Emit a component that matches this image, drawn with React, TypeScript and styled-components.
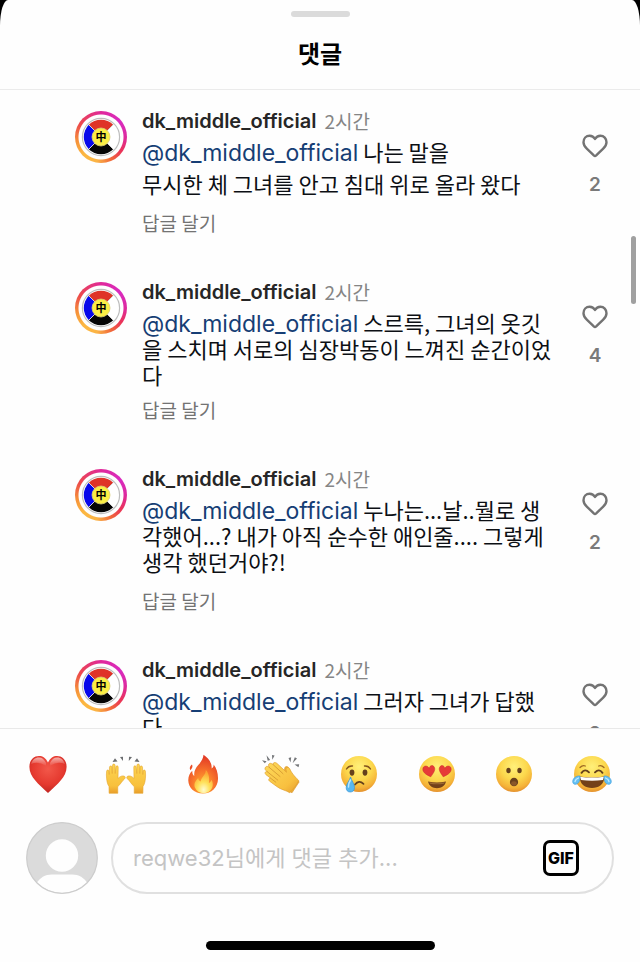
import React from "react";
import styled, { createGlobalStyle } from "styled-components";

const GlobalStyle = createGlobalStyle`
  * { box-sizing: border-box; }
  body { margin: 0; background: #000; }
  button { padding: 0; border: 0; background: none; font: inherit; color: inherit; cursor: pointer; }
`;

const latin = `Inter, "Noto Sans CJK KR", sans-serif`;
const korean = `"Noto Sans CJK KR", sans-serif`;

const Sheet = styled.div`
  position: relative;
  display: flex;
  flex-direction: column;
  height: 100vh;
  background: #fefefe;
  border-radius: 8px 8px 0 0 / 26px 26px 0 0;
  overflow: hidden;
  font-family: ${latin};
  color: #0c0f14;
`;

const Header = styled.header`
  display: flex;
  flex-direction: column;
  align-items: center;
  gap: 17px;
  padding: 11px 0 18px;
  border-bottom: 1px solid #ebebeb;
`;

const Grabber = styled.div`
  width: 59px;
  height: 6px;
  border-radius: 3px;
  background: #dbdbdb;
`;

const Title = styled.h1`
  margin: 0;
  font: 700 24px/37px ${korean};
  color: #000;
`;

const List = styled.ul`
  flex: 1;
  min-height: 0;
  margin: 0;
  padding: 19px 32px 0 75px;
  list-style: none;
  overflow-y: auto;
  scrollbar-width: none;
`;

const ScrollThumb = styled.div`
  position: absolute;
  top: 236px;
  right: 4px;
  width: 5px;
  height: 68px;
  border-radius: 3px;
  background: #a0a0a0;
`;

const Item = styled.li`
  display: flex;
  align-items: flex-start;
  gap: 15px;
  padding-bottom: 45px;
`;

const Ring = styled.a`
  flex: none;
  display: grid;
  place-items: center;
  width: 52px;
  height: 52px;
  margin-top: 2px;
  border-radius: 50%;
  background: radial-gradient(circle, #fefefe 22px, transparent 23px),
    conic-gradient(#e0289a 0deg, #d92bc0 50deg, #dd2a9f 90deg, #ea3358 125deg, #f0673a 155deg, #fbb445 190deg, #fcb740 225deg, #f6923a 260deg, #ec4a4a 300deg, #e0289a 360deg);
`;

const Content = styled.div`
  flex: 1;
  min-width: 0;
`;

const Meta = styled.div`
  display: flex;
  align-items: center;
  gap: 8px;
  height: 24px;
`;

const Author = styled.a`
  font: 600 20px/24px ${latin};
  color: #262626;
  text-decoration: none;
`;

const Time = styled.time`
  font: 400 19px/24px ${korean};
  color: #858585;
`;

const bodySpacing = {
  roomy: { margin: "2px 0 12px", line: "32px" },
  compact: { margin: "5px 0 11px", line: "26px" },
  regular: { margin: "5px 0 15px", line: "26px" },
};

const Body = styled.p<{ $spacing: keyof typeof bodySpacing }>`
  margin: ${(p) => bodySpacing[p.$spacing].margin};
  font: 400 22px/${(p) => bodySpacing[p.$spacing].line} ${korean};
  white-space: pre-line;
`;

const Mention = styled.a`
  font-family: ${latin};
  font-size: 23px;
  line-height: 20px;
  color: #163e75;
  text-decoration: none;
`;

const Reply = styled.button`
  display: block;
  font: 400 19px/24px ${korean};
  color: #737373;
`;

const Like = styled.button`
  flex: none;
  display: flex;
  flex-direction: column;
  align-items: center;
  gap: 15px;
  width: 26px;
  margin-top: 25px;
  font: 600 19px/24px ${latin};
  color: #7a7a7a;
  svg { display: block; }
`;

const Footer = styled.footer`
  display: flex;
  flex-direction: column;
  padding: 25px 26px 12px;
  border-top: 1px solid #e9e9e9;
`;

const Emojis = styled.div`
  display: flex;
  justify-content: space-between;
  padding: 0 2px;
`;

const EmojiButton = styled.button`
  width: 40px;
  height: 40px;
  svg { display: block; overflow: visible; }
`;

const Composer = styled.form`
  display: flex;
  align-items: center;
  gap: 13px;
  margin: 28px 0 47px;
`;

const Field = styled.div`
  flex: 1;
  display: flex;
  align-items: center;
  height: 72px;
  padding: 0 33px 0 20px;
  border: 2px solid #e0e0e0;
  border-radius: 36px;
`;

const TextBox = styled.input`
  flex: 1;
  min-width: 0;
  padding: 0;
  border: 0;
  outline: 0;
  background: none;
  font: 400 22px/32px ${latin};
  &::placeholder { color: #c4c4c4; opacity: 1; }
`;

const GifButton = styled.button`
  && {
    width: 36px;
    height: 36px;
    border: 3px solid #000;
    border-radius: 7px;
    font: 800 16px/30px ${latin};
    color: #000;
    text-align: center;
  }
`;

const HomeBar = styled.div`
  align-self: center;
  width: 229px;
  height: 9px;
  border-radius: 5px;
  background: #000;
`;

const Crest = () => (
  <svg width="40" height="40" viewBox="0 0 40 40" aria-hidden="true">
    <circle cx="20" cy="20" r="18.6" fill="#fff" stroke="#bdbdbd" strokeWidth="1.2" />
    <path d="M20 20 L7.8 7.8 A17.3 17.3 0 0 1 32.2 7.8Z" fill="#df3328" />
    <path d="M20 20 L7.8 32.2 A17.3 17.3 0 0 1 7.8 7.8Z" fill="#0808ea" />
    <path d="M20 20 L32.2 32.2 A17.3 17.3 0 0 1 7.8 32.2Z" fill="#050505" />
    <path d="M7.5 7.5 L32.5 32.5 M32.5 7.5 L7.5 32.5" stroke="#d5d5d5" strokeWidth="1" />
    <circle cx="20" cy="20" r="9" fill="#fbee45" stroke="#d8ce79" strokeWidth=".8" />
    <text x="20" y="24" textAnchor="middle" fontFamily="Noto Sans CJK KR" fontWeight="700" fontSize="11" fill="#000">中</text>
  </svg>
);

const LikeHeart = () => (
  <svg width="26" height="24" viewBox="0 0 26 24" fill="none" aria-hidden="true">
    <path
      d="M13 5C11.8 2.9 9.8 1.8 7.6 1.8C4.1 1.8 1.5 4.6 1.5 8.3C1.5 10.9 2.8 12.7 4.8 14.6L11.8 21.4Q13 22.5 14.2 21.4L21.2 14.6C23.2 12.7 24.5 10.9 24.5 8.3C24.5 4.6 21.9 1.8 18.4 1.8C16.2 1.8 14.2 2.9 13 5Z"
      stroke="#737373" strokeWidth="2.4" strokeLinejoin="round"
    />
  </svg>
);

const Face = ({ id, children }: { id: string; children: React.ReactNode }) => (
  <svg width="40" height="40" viewBox="0 0 40 40" fill="none" aria-hidden="true">
    <defs>
      <radialGradient id={id} cx=".5" cy=".3" r=".72">
        <stop offset="0" stopColor="#fff07a" />
        <stop offset=".5" stopColor="#fcd84d" />
        <stop offset=".82" stopColor="#f5b238" />
        <stop offset="1" stopColor="#e18b2c" />
      </radialGradient>
    </defs>
    <circle cx="20" cy="20" r="18" fill={`url(#${id})`} />
    {children}
  </svg>
);

const RedHeart = () => (
  <svg width="40" height="40" viewBox="0 0 40 40" aria-hidden="true">
    <defs>
      <radialGradient id="rh" cx=".5" cy=".35" r=".7">
        <stop offset="0" stopColor="#f2584a" />
        <stop offset=".6" stopColor="#e5392f" />
        <stop offset="1" stopColor="#b9221f" />
      </radialGradient>
      <linearGradient id="rs" x1="0" y1="0" x2="0" y2="1">
        <stop offset="0" stopColor="#fff" stopOpacity=".6" />
        <stop offset="1" stopColor="#fff" stopOpacity="0" />
      </linearGradient>
    </defs>
    <path d="M20 8.5C17.8 3.9 14.6 2 11 2C5.2 2 1.4 6.6 1.4 12.8C1.4 23 10.5 30 20 39C29.5 30 38.6 23 38.6 12.8C38.6 6.6 34.8 2 29 2C25.4 2 22.2 3.9 20 8.5Z" fill="url(#rh)" />
    <path d="M18 9C16 5 14 3.4 11 3.4C7 3.4 4 6 3.2 10Q10 6.5 18 12ZM22 9C24 5 26 3.4 29 3.4C33 3.4 36 6 36.8 10Q30 6.5 22 12Z" fill="url(#rs)" />
  </svg>
);

const hand =
  "M3.1 39.3L3 32.5C1.3 30 .5 26.5 .4 21L.6 17.2C.7 15.6 2.8 15.6 3 17.2L3.2 20.5L3.5 13.2C3.6 11.5 5.9 11.5 6 13.2L6.2 19.5L6.5 11.3C6.6 9.6 9 9.6 9.1 11.3L9.2 19.5L9.9 13C10.1 11.3 12.3 11.5 12.2 13.2L12 24.5C13.5 22.8 15.6 21.5 17.8 22C19.5 22.4 19.7 24 18.5 24.9C16.5 26.3 14.5 30.5 11.7 32.7L11.8 39.3Z";

const RaisedHands = () => (
  <svg width="40" height="40" viewBox="0 0 40 40" aria-hidden="true">
    <defs>
      <linearGradient id="hd" x1="0" y1="0" x2="0" y2="1">
        <stop offset="0" stopColor="#fcd451" />
        <stop offset=".75" stopColor="#f8c03c" />
        <stop offset="1" stopColor="#e99d2b" />
      </linearGradient>
    </defs>
    <path d={hand} fill="url(#hd)" stroke="#e6a62f" strokeWidth=".6" />
    <path d={hand} fill="url(#hd)" stroke="#e6a62f" strokeWidth=".6" transform="translate(40 0) scale(-1 1)" />
    <path d="M6.5 8L9 4.2L11.5 7.6ZM14 3L17 2.8L17 7ZM26 3L23 2.8L22.8 7ZM33.5 8L31 4.2L28.5 7.6Z" fill="#6b6d70" />
  </svg>
);

const Fire = () => (
  <svg width="40" height="40" viewBox="0 0 40 40" aria-hidden="true">
    <defs>
      <radialGradient id="fo" cx=".5" cy=".8" r=".75">
        <stop offset="0" stopColor="#ffb52e" />
        <stop offset=".5" stopColor="#f8752b" />
        <stop offset="1" stopColor="#e33b26" />
      </radialGradient>
      <radialGradient id="fi" cx=".5" cy=".85" r=".75">
        <stop offset="0" stopColor="#fffbd0" />
        <stop offset=".45" stopColor="#ffe15a" />
        <stop offset="1" stopColor="#fba330" />
      </radialGradient>
    </defs>
    <path d="M20.5 .8C24.5 3.3 29.3 8.5 28.6 14.5C30.3 13.6 30.8 12 30.6 10.5C33.5 14 35.2 19.5 35 25C34.8 33.5 28.5 39.6 20 39.6C11.3 39.6 5.4 33.6 5.3 26.5C5.2 22.2 6.8 19 9.3 16.8C9.2 19.6 9.9 21 11.3 22C10.8 17.8 12.2 14.5 15.5 10.8C18.3 7.7 20.2 4.5 20.5 .8ZM9 10.5C10 12.5 9.3 14.5 7.3 16.2C6.2 14 7 12.1 9 10.5Z" fill="url(#fo)" />
    <path d="M22.8 16C23 20.5 19 22 17.6 27.5C16 26.8 15.2 25.5 15.2 24C12.2 27 10.5 30 12 33.8C13.5 37.4 16.8 39.2 20.5 39.2C26 39.2 29.8 35.2 29.8 30.5C29.8 28.5 29.2 27 28.4 25.8C28 27.5 27.2 28.4 25.9 29C26.6 24 26 19.5 22.8 16Z" fill="url(#fi)" />
  </svg>
);

const Clap = () => (
  <svg width="40" height="40" viewBox="0 0 40 40" fill="none" aria-hidden="true">
    <defs>
      <linearGradient id="cl" x1="0" y1="0" x2="1" y2="1">
        <stop offset="0" stopColor="#fdd95a" />
        <stop offset=".7" stopColor="#f8c03f" />
        <stop offset="1" stopColor="#e59a2c" />
      </linearGradient>
    </defs>
    <path d="M16 13L23.5 18L23.6 14.5C24 11.5 27.4 12 27.8 14.8C28.3 19.5 34 24.5 38.2 27.8L31 38.8L20 32Z" fill="#eeb035" stroke="#d8922a" strokeWidth=".6" />
    <path d="M4.5 13.2C5.6 11.8 7 12.3 8.2 13.4L7.5 11.5C7.3 9.3 9.5 8.7 11 9.9L12 10.5C12 8.3 14.3 8 15.8 9.3L25.5 18.3L25 15.5C24.8 13 27.5 12.7 28.7 14.8C30.5 18.5 32.5 21.5 37.8 26.6C35.5 31 32 35.5 28.8 38.8C25.5 36.4 19.5 35.6 15.8 32.5L8.6 27.2C6.8 25.6 8.2 23.8 9.6 24.2L5 20.7C3.1 19 4.5 17.2 6.2 17.7L5 16.5C3.8 15.4 3.7 14.3 4.5 13.2Z" fill="url(#cl)" stroke="#dfa032" strokeWidth=".7" />
    <path d="M8.2 13.4L19 22.5M12 10.5L22 19.7M6.2 17.7L16.8 26.1M9.6 24.2L14.8 28.2" stroke="#d0942f" strokeWidth=".8" strokeLinecap="round" />
    <path d="M1 6.2L5.6 7.2L3.8 9.3ZM5.5 1.2L9.2 5.9L6.7 6.8ZM11 1L13.6 1.5L11.3 5.8ZM27.5 4L30.2 3.2L29.5 8.5ZM36 4.5L33.8 3.3L31.6 9.3ZM38.2 10.3L33.5 10.5L37.5 13.2Z" fill="#747679" />
  </svg>
);

const Crying = () => (
  <Face id="fc">
    <ellipse cx="13" cy="18.6" rx="2.4" ry="3.1" fill="#65401c" />
    <ellipse cx="26" cy="18.6" rx="2.4" ry="3.1" fill="#65401c" />
    <path d="M7.5 15Q9.5 11.6 13.5 12M25.5 12Q29.5 11.6 31.5 15" stroke="#81521e" strokeWidth="1.4" strokeLinecap="round" />
    <path d="M16 30.5Q20 25.6 24.5 29.8" stroke="#65401c" strokeWidth="1.8" strokeLinecap="round" />
    <path d="M11.5 23C12.5 26.5 15.5 30 15.5 33.5C15.5 36.5 13.7 38 11.2 38C8.6 38 7.1 36.3 7.2 33.5C7.3 29.5 10.5 27 11.5 23Z" fill="#59b8ef" stroke="#3695d8" strokeWidth=".7" />
    <path d="M11.5 26Q9 30 9.5 33" stroke="#bce8ff" strokeWidth="1.5" strokeLinecap="round" />
  </Face>
);

const eyeHeart = "M0 3C-1 -.5 -6.2 -.2 -6.2 3.7C-6.2 7.5 -2 9.5 1.8 11.3C4 8 7 4.5 5.2 1.5C3.7 -.9 .8 -.2 0 3Z";

const HeartEyes = () => (
  <Face id="fh">
    <path d={eyeHeart} fill="#e63b38" stroke="#c92828" strokeWidth=".5" transform="translate(12 11.5)" />
    <path d={eyeHeart} fill="#e63b38" stroke="#c92828" strokeWidth=".5" transform="translate(28 11.5) scale(-1 1)" />
    <path d="M11 27.5Q20 29.5 29 27.5C28 32 24.5 34.2 20 34.2S12 32 11 27.5Z" fill="#734119" />
    <path d="M12.2 28.3Q20 30 27.8 28.3L27 29.7Q20 31 13 29.7Z" fill="#9d6a34" />
  </Face>
);

const Surprised = () => (
  <Face id="fs">
    <ellipse cx="14.5" cy="16.5" rx="2.2" ry="2.8" fill="#65401c" />
    <ellipse cx="25.5" cy="16.5" rx="2.2" ry="2.8" fill="#65401c" />
    <ellipse cx="20" cy="28" rx="4.1" ry="4.3" fill="#69401d" />
    <ellipse cx="20" cy="29.5" rx="2.8" ry="2.2" fill="#8a572a" />
  </Face>
);

const Joy = () => (
  <Face id="fj">
    <path d="M8 13.5Q10.5 11 13.3 12M26.7 12Q29.5 11 32 13.5" stroke="#9d6824" strokeWidth="1.3" strokeLinecap="round" />
    <path d="M9.5 18.8Q13 14.2 17 18.3M23 18.3Q27 14.2 30.5 18.8" stroke="#65401c" strokeWidth="1.9" strokeLinecap="round" />
    <path d="M7.5 22.5Q20 24.5 32.5 22.5C32 30.5 27 34 20 34S8 30.5 7.5 22.5Z" fill="#734119" />
    <path d="M8 22.7Q20 24.5 32 22.7L31 26Q20 27.5 9 26Z" fill="#fff" />
    <path d="M8 22C4.5 21.5 1 24 .7 27.2C.5 29.3 2 30.7 4 30.3C7.5 29.5 8 25.5 8 22ZM32 22C35.5 21.5 39 24 39.3 27.2C39.5 29.3 38 30.7 36 30.3C32.5 29.5 32 25.5 32 22Z" fill="#65c0f3" stroke="#3b9bdc" strokeWidth=".6" />
    <path d="M6.5 24Q3.5 25 3 27.5M33.5 24Q36.5 25 37 27.5" stroke="#c5edff" strokeWidth="1.3" strokeLinecap="round" />
  </Face>
);

const Profile = () => (
  <svg width="72" height="72" viewBox="0 0 72 72" role="img" aria-label="내 프로필">
    <clipPath id="pc"><circle cx="36" cy="36" r="35" /></clipPath>
    <circle cx="36" cy="36" r="35.5" fill="#dbdbdb" />
    <circle cx="36" cy="33.5" r="16.2" fill="#fefefe" />
    <path clipPath="url(#pc)" d="M10 62C14 55.5 19 52.5 26 52.5H46C53 52.5 58 55.5 62 62V72H10Z" fill="#fefefe" />
    <circle cx="36" cy="36" r="35.3" fill="none" stroke="#cdcdcd" strokeWidth="1.2" />
  </svg>
);

type Comment = { text: string; likes: number; spacing: keyof typeof bodySpacing };

const comments: Comment[] = [
  { text: "나는 말을\n무시한 체 그녀를 안고 침대 위로 올라 왔다", likes: 2, spacing: "roomy" },
  { text: "스르륵, 그녀의 옷깃\n을 스치며 서로의 심장박동이 느껴진 순간이었\n다", likes: 4, spacing: "compact" },
  { text: "누나는...날..뭘로 생\n각했어...? 내가 아직 순수한 애인줄.... 그렇게\n생각 했던거야?!", likes: 2, spacing: "regular" },
  { text: "그러자 그녀가 답했\n다", likes: 2, spacing: "regular" },
];

const reactions = [
  { label: "하트", Icon: RedHeart },
  { label: "만세", Icon: RaisedHands },
  { label: "불", Icon: Fire },
  { label: "박수", Icon: Clap },
  { label: "슬퍼요", Icon: Crying },
  { label: "사랑해요", Icon: HeartEyes },
  { label: "놀라워요", Icon: Surprised },
  { label: "웃겨요", Icon: Joy },
];

const account = "dk_middle_official";

export default function App() {
  return (
    <>
      <GlobalStyle />
      <Sheet>
        <Header>
          <Grabber />
          <Title>댓글</Title>
        </Header>
        <List>
          {comments.map((c, i) => (
            <Item key={i}>
              <Ring href="#profile" aria-label={account}><Crest /></Ring>
              <Content>
                <Meta>
                  <Author href="#profile">{account}</Author>
                  <Time>2시간</Time>
                </Meta>
                <Body $spacing={c.spacing}>
                  <Mention href="#profile">{`@${account}`}</Mention>
                  {` ${c.text}`}
                </Body>
                <Reply type="button">답글 달기</Reply>
              </Content>
              <Like type="button" aria-label={`좋아요 ${c.likes}개`}>
                <LikeHeart />
                <span>{c.likes}</span>
              </Like>
            </Item>
          ))}
        </List>
        <ScrollThumb />
        <Footer>
          <Emojis>
            {reactions.map(({ label, Icon }) => (
              <EmojiButton key={label} type="button" aria-label={label}><Icon /></EmojiButton>
            ))}
          </Emojis>
          <Composer onSubmit={(e) => e.preventDefault()}>
            <Profile />
            <Field>
              <TextBox aria-label="댓글 추가" placeholder="reqwe32님에게 댓글 추가..." />
              <GifButton type="button">GIF</GifButton>
            </Field>
          </Composer>
          <HomeBar />
        </Footer>
      </Sheet>
    </>
  );
}
